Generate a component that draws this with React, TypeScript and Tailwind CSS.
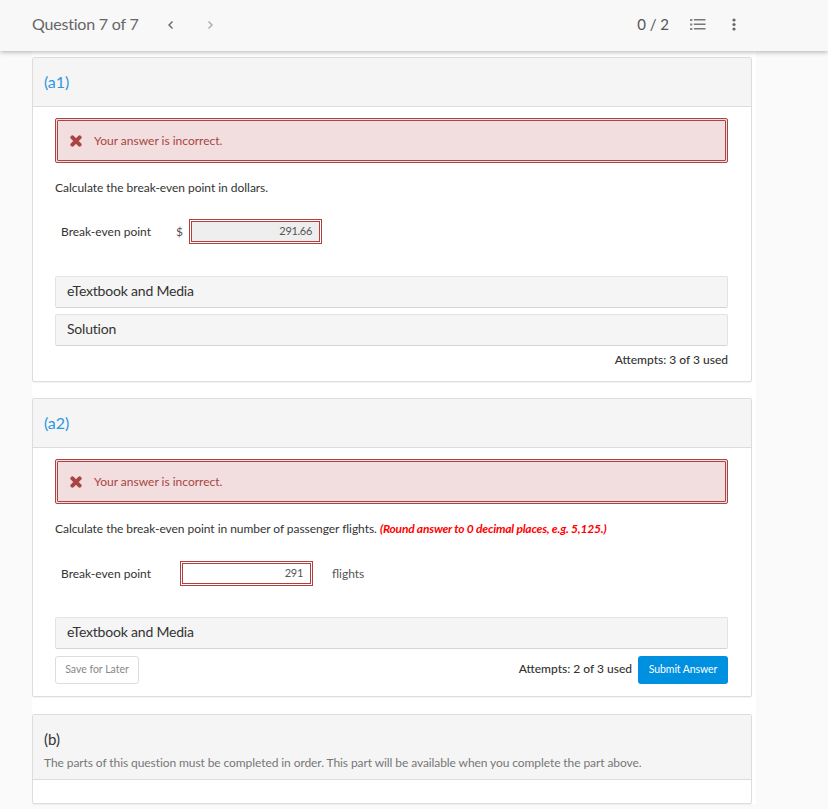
import React from "react";

function ErrorBox() {
  return (
    <div className="flex h-[45px] items-center rounded-[2px] border border-[#a94442] bg-[#f2dede] p-px">
      <div className="flex h-full w-full items-center rounded-[1px] border border-[#a94442] pl-[12px] text-[12px] text-[#a94442]">
        <svg width="12" height="12" viewBox="0 0 12 12" className="mr-[12px]">
          <path d="M2.4 2.4 L9.6 9.6 M9.6 2.4 L2.4 9.6" stroke="#a94442" strokeWidth="4" strokeLinecap="round" />
        </svg>
        Your answer is incorrect.
      </div>
    </div>
  );
}

function Bar({ children }: { children: React.ReactNode }) {
  return (
    <div className="flex h-[32px] items-center rounded-[2px] border border-[#e3e3e3] border-b-[#d4d4d4] bg-[#f5f5f5] pb-[3px] pl-[11px] text-[14px] tracking-[-0.2px] text-[#333]">
      {children}
    </div>
  );
}

function AnswerInput({ value, grey }: { value: string; grey?: boolean }) {
  return (
    <div className="h-[25px] w-[133px] border border-[#b03f3d] bg-white p-px">
      <div
        className={`flex h-full items-center justify-end border border-[#b03f3d] pr-[7px] text-[11px] tracking-[-0.3px] text-[#555] ${
          grey ? "bg-[#eeeeee]" : "bg-white"
        }`}
      >
        {value}
      </div>
    </div>
  );
}

export default function App() {
  return (
    <div className="h-[809px] w-[828px] overflow-hidden bg-[#fafafa] font-['Lato','Liberation_Sans',sans-serif]">
      <header className="relative z-10 flex h-[51px] items-center bg-[#f8f8f8] pb-[2px] pl-[32px] pr-[92px] shadow-[0_1px_5px_rgba(0,0,0,0.3)]">
        <span className="mb-[2px] w-[125px] text-[16px] tracking-[-0.2px] text-[#666]">Question 7 of 7</span>
        <svg width="8" height="10" viewBox="0 0 8 10" className="ml-[10px]">
          <path d="M5.5 1.5 L2 5 L5.5 8.5" fill="none" stroke="#666" strokeWidth="1.4" />
        </svg>
        <svg width="8" height="10" viewBox="0 0 8 10" className="ml-[31px]">
          <path d="M2.5 1.5 L6 5 L2.5 8.5" fill="none" stroke="#aaa" strokeWidth="1.4" />
        </svg>
        <span className="ml-auto text-[15px] text-[#555]">0 / 2</span>
        <svg width="16" height="13" viewBox="0 0 16 13" className="ml-[21px]">
          <g fill="#888">
            <rect x="0" y="1" width="2.4" height="2" />
            <rect x="0" y="5.5" width="2.4" height="2" />
            <rect x="0" y="10" width="2.4" height="2" />
          </g>
          <g fill="#777">
            <rect x="4" y="1" width="11.5" height="1.5" />
            <rect x="4" y="5.5" width="11.5" height="1.5" />
            <rect x="4" y="10" width="11.5" height="1.5" />
          </g>
        </svg>
        <svg width="4" height="13" viewBox="0 0 4 13" className="ml-[26px]">
          <circle cx="2" cy="2" r="1.6" fill="#666" />
          <circle cx="2" cy="6.5" r="1.6" fill="#666" />
          <circle cx="2" cy="11" r="1.6" fill="#666" />
        </svg>
      </header>

      <main className="ml-[32px] w-[724px] bg-white pr-[4px] pt-[6px]">
        {/* (a1) */}
        <section className="h-[325px] rounded-[2px] border border-[#dddddd] bg-white shadow-[0_1px_1px_rgba(0,0,0,0.05)]">
          <div className="flex h-[49px] items-center border-b border-[#dddddd] bg-[#f5f5f5] pl-[11px] text-[16px] tracking-[-0.1px] text-[#2f96e0]">
            (a1)
          </div>
          <div className="pl-[22px] pr-[23px] pt-[11px]">
            <ErrorBox />
            <p className="mt-[17px] text-[12px] leading-[16px] tracking-[-0.03px] text-[#333]">
              Calculate the break-even point in dollars.
            </p>
            <div className="mt-[23px] flex h-[25px] items-center pl-[6px] text-[12px] text-[#333]">
              <span className="w-[115px]">Break-even point</span>
              <span className="w-[13px] text-[#555]">$</span>
              <AnswerInput value="291.66" grey />
            </div>
            <div className="mt-[32px] flex flex-col gap-[6px]">
              <Bar>eTextbook and Media</Bar>
              <Bar>Solution</Bar>
            </div>
            <div className="mt-[6px] text-right text-[12px] font-medium leading-[16px] text-[#333]">
              Attempts: 3 of 3 used
            </div>
          </div>
        </section>

        {/* (a2) */}
        <section className="mt-[16px] h-[299px] rounded-[2px] border border-[#dddddd] bg-white shadow-[0_1px_1px_rgba(0,0,0,0.05)]">
          <div className="flex h-[49px] items-center border-b border-[#dddddd] bg-[#f5f5f5] pl-[11px] text-[16px] tracking-[-0.1px] text-[#2f96e0]">
            (a2)
          </div>
          <div className="pl-[22px] pr-[23px] pt-[11px]">
            <ErrorBox />
            <p className="mt-[17px] text-[12px] leading-[16px] tracking-[-0.05px] text-[#333]">
              Calculate the break-even point in number of passenger flights.{" "}
              <b className="italic tracking-[-0.2px] text-[#ff0000]">(Round answer to 0 decimal places, e.g. 5,125.)</b>
            </p>
            <div className="mt-[24px] flex h-[25px] items-center pl-[6px] text-[12px] text-[#333]">
              <span className="w-[119px]">Break-even point</span>
              <AnswerInput value="291" />
              <span className="ml-[19px] text-[#555]">flights</span>
            </div>
            <div className="mt-[31px]">
              <Bar>eTextbook and Media</Bar>
            </div>
            <div className="mt-[7px] flex items-center">
              <button className="h-[28px] w-[84px] rounded-[3px] border border-[#dddddd] bg-white text-[10.5px] text-[#888]">
                Save for Later
              </button>
              <span className="ml-auto pb-[2px] text-[12px] font-medium text-[#333]">Attempts: 2 of 3 used</span>
              <button className="ml-[6px] h-[28px] w-[90px] rounded-[3px] bg-[#0090e0] text-[10.5px] tracking-[-0.1px] text-white">
                Submit Answer
              </button>
            </div>
          </div>
        </section>

        {/* (b) */}
        <section className="mt-[17px] h-[90px] rounded-[2px] border border-[#dddddd] bg-white shadow-[0_1px_1px_rgba(0,0,0,0.05)]">
          <div className="h-[65px] border-b border-[#dddddd] bg-[#f5f5f5] pl-[11px] pt-[14px]">
            <div className="text-[15px] leading-[20px] text-[#333]">(b)</div>
            <div className="mt-[6px] text-[12px] leading-[16px] tracking-[-0.085px] text-[#777]">
              The parts of this question must be completed in order. This part will be available when you complete the part above.
            </div>
          </div>
        </section>
      </main>
    </div>
  );
}
